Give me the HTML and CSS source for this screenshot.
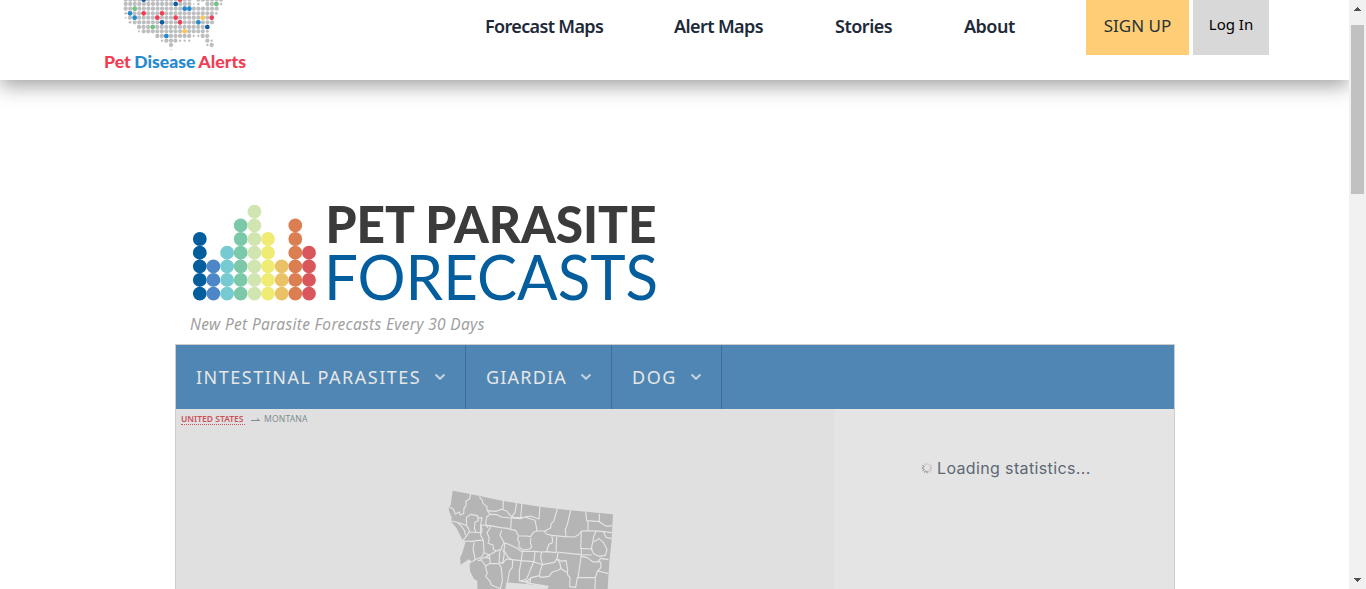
FILE: index.html
```html
<!DOCTYPE html>
<html lang="en">
<head>
<meta charset="utf-8">
<title>Pet Disease Alerts</title>
<link rel="stylesheet" href="styles.css">
</head>
<body>
<div class="window">
<div class="page">
<header class="header">
  <a class="brand">
    <svg width="160" height="80" viewBox="0 0 480 240">
      <g class="dots" fill="none" stroke="#bcbec0" stroke-linecap="round" stroke-width="12.8" stroke-dasharray="0 13.65">
        <path d="M92-1H285M310-1H384"/>
        <path d="M92 12H285M337 12H366"/>
        <path d="M92 26H366"/>
        <path d="M105 40H352"/>
        <path d="M105 53H352"/>
        <path d="M119 67H352"/>
        <path d="M132 81H339"/>
        <path d="M146 94H325"/>
        <path d="M187 108H285M323 108H339"/>
        <path d="M214 122H244M337 122H339"/>
        <path d="M228 135H230M350 135H352"/>
      </g>
      <g fill="#bcbec0">
        <circle cx="378" cy="12" r="4"/><circle cx="310" cy="12" r="4"/><circle cx="296" cy="12" r="2.5"/><circle cx="364" cy="40" r="4"/><circle cx="92" cy="40" r="4"/><circle cx="92" cy="53" r="2.5"/><circle cx="105" cy="67" r="4"/><circle cx="132" cy="94" r="3"/><circle cx="337" cy="94" r="4.5"/><circle cx="296" cy="108" r="3.5"/><circle cx="310" cy="108" r="3.5"/><circle cx="201" cy="122" r="3.5"/><circle cx="255" cy="122" r="3.5"/><circle cx="269" cy="122" r="3.5"/><circle cx="283" cy="122" r="3.5"/><circle cx="350" cy="122" r="3.5"/><circle cx="337" cy="135" r="3.5"/><circle cx="228" cy="149" r="2"/>
      </g>
      <g fill="#ef3e55"><circle cx="255" cy="-1" r="7"/><circle cx="146" cy="40" r="7"/><circle cx="201" cy="40" r="7"/><circle cx="187" cy="53" r="7"/><circle cx="242" cy="53" r="7"/><circle cx="350" cy="53" r="7"/><circle cx="255" cy="67" r="7"/></g>
      <g fill="#2489ce"><circle cx="269" cy="26" r="7"/><circle cx="283" cy="26" r="7"/><circle cx="105" cy="40" r="7"/><circle cx="119" cy="53" r="7"/><circle cx="310" cy="67" r="7"/><circle cx="214" cy="108" r="7"/></g>
      <g fill="#0d5ca3"><circle cx="146" cy="-1" r="7"/><circle cx="242" cy="12" r="7"/><circle cx="201" cy="67" r="7"/><circle cx="337" cy="81" r="7"/></g>
      <g fill="#6fc482"><circle cx="364" cy="12" r="7"/><circle cx="119" cy="26" r="7"/><circle cx="173" cy="81" r="7"/></g>
      <g fill="#fdc658"><circle cx="323" cy="53" r="7"/><circle cx="269" cy="94" r="7"/></g>
      <g class="brand-name">
        <text x="27" y="203" textLength="80" lengthAdjust="spacingAndGlyphs" fill="#ef3e55">Pet</text>
        <text x="118" y="203" textLength="183" lengthAdjust="spacingAndGlyphs" fill="#2489ce">Disease</text>
        <text x="310" y="203" textLength="143" lengthAdjust="spacingAndGlyphs" fill="#ef3e55">Alerts</text>
      </g>
    </svg>
  </a>
  <nav class="nav">
    <a class="nav-maps">Forecast Maps</a>
    <a class="nav-alerts">Alert Maps</a>
    <a class="nav-stories">Stories</a>
    <a class="nav-about">About</a>
  </nav>
  <div class="actions">
    <a class="signup">SIGN UP</a>
    <a class="login">Log In</a>
  </div>
</header>
<main class="main">
  <svg class="title" width="480" height="110" viewBox="0 0 480 110">
    <g fill="none" stroke-width="13.8" stroke-linecap="round" stroke-dasharray="0 13.65">
      <path stroke="#045d9d" d="M9.8 98.6V43.9"/>
      <path stroke="#4d87c8" d="M23.4 98.6V71"/>
      <path stroke="#76cad1" d="M37.1 98.6V57.5"/>
      <path stroke="#7bc9a9" d="M50.7 98.6V30.2"/>
      <path stroke="#d1e5b0" d="M64.4 98.6V16.6"/>
      <path stroke="#f0eb72" d="M78 98.6V43.9"/>
      <path stroke="#eac166" d="M91.7 98.6V71"/>
      <path stroke="#db7e52" d="M105.3 98.6V30.2"/>
      <path stroke="#d9565c" d="M119 98.6V57.5"/>
    </g>
    <text class="title-top" x="135.5" y="47.5" textLength="331" lengthAdjust="spacingAndGlyphs">PET PARASITE</text>
    <text class="title-bottom" x="134" y="105" textLength="334" lengthAdjust="spacingAndGlyphs">FORECASTS</text>
  </svg>
  <p class="tagline">New Pet Parasite Forecasts Every 30 Days</p>
  <section class="widget">
    <div class="menu">
      <div class="menu-item parasites"><span>INTESTINAL PARASITES</span><svg width="12" height="8" viewBox="0 0 12 8"><path d="M1.5 1.5 6 5.8 10.5 1.5"/></svg></div>
      <div class="menu-item giardia"><span>GIARDIA</span><svg width="12" height="8" viewBox="0 0 12 8"><path d="M1.5 1.5 6 5.8 10.5 1.5"/></svg></div>
      <div class="menu-item dog"><span>DOG</span><svg width="12" height="8" viewBox="0 0 12 8"><path d="M1.5 1.5 6 5.8 10.5 1.5"/></svg></div>
    </div>
    <div class="content">
      <div class="map">
        <div class="crumbs"><a class="country">UNITED STATES</a><svg width="10" height="5" viewBox="0 0 10 5"><path d="M0 3.5H8.5L6 1.5" fill="none" stroke="#7f8c8d"/></svg><span class="region">MONTANA</span></div>
        <svg class="state" width="200" height="109" viewBox="0 0 600 327">
          <path fill="#b5b5b5" d="M68 32 120 42 220 63 330 80 420 91 549 103 544 190 538 245 533 327H352L356 319 290 312 229 307 226 327H142V302L132 297 120 274 119 251 127 245 116 238 92 254 90 234 96 221 107 185 98 181 90 165 79 143 64 126 65 112 57 93 56 83 62 76Z"/>
          <g fill="none" stroke="#e5e5e5" stroke-width="3.4" stroke-linejoin="round">
            <path d="M58 82 70 87 76 102 88 96 90 105 101 101 102 84 108 78 108 63 118 58 122 42M148 50 157 61 159 70 171 80 171 90 180 103 170 111 167 129 173 143"/>
            <path d="M64 123 90 129 110 137 109 113 122 103 142 107 144 114 156 113 152 135 156 150 154 158 118 156 106 173 98 181M110 137 115 145 119 156M142 107 145 122 135 126 133 145 138 157M82 128 95 139 104 153 106 165"/>
            <path d="M171 92 199 94 214 88 230 93 241 107 252 112M220 63 219 90M180 103 201 104 214 111 241 114M260 68 255 97 244 113 242 148M276 70 272 114M250 113 276 113 302 108 327 117 330 80M242 114 272 116 284 111 315 121 319 140 321 154M180 137 212 143 234 145 242 149 257 151 265 167"/>
            <path d="M153 135 180 137 180 144 171 158 178 175 174 190 189 195 190 208 199 213M152 135V166L160 181 162 218 156 230 134 240 127 245M98 183 126 184 146 181 160 181M133 187 129 207 134 229 135 241M215 151 210 166 218 180 222 188 216 199 214 207 199 213 178 225 163 218"/>
            <path d="M382 87 371 124 363 132 362 143 344 154 349 162 365 166 404 170 432 171 445 165 456 152M422 91 412 133 406 149 408 169M321 153 310 157 302 170 288 168 265 168 263 180 268 187 266 201 280 210 299 207 305 201 301 189 303 174M321 153 344 153M365 168 368 178 366 190 357 192 350 213"/>
            <path d="M467 96 470 122 508 125 508 101M508 125 521 134 530 139 546 137M474 124 474 152 515 154 545 158M456 153 474 152M380 171 378 216 454 224 485 225M454 155 452 205 488 207M498 154 491 170 484 207 491 221 506 229 526 226 531 208 520 187 507 176 491 185M520 155 528 172 544 176"/>
            <path d="M222 188 236 193 260 204 274 214 315 214 335 216 352 215 378 218M225 189 222 210 233 230 245 239 274 242 310 245 337 254 373 247 381 236 384 218M277 214 274 242 268 272 268 303 288 299 296 283 303 265 312 244 315 214M335 216 332 232 337 254 331 272 328 288 332 292 357 289 366 277 386 270 393 265"/>
            <path d="M210 209 207 247 218 250 229 237 248 239 247 262 238 274 233 306M178 225 181 250 166 258 172 281 166 288 180 304 184 315 211 326 217 302 214 263 207 251 181 251M151 238 166 232 181 235M218 209 223 220 218 250M166 232 178 224M143 242 154 240 166 256M287 306 304 293 329 287M272 304 301 306 302 293"/>
            <path d="M381 236 394 244 408 241 413 268 412 283 420 293 419 320 437 322 442 293 496 293M512 246 504 245M454 224 444 293M454 208 454 229 472 233 489 246 504 245 512 235 535 239M393 265 389 247 382 240M393 266 410 277M512 246 513 263 503 273 535 280M503 273 496 293 495 327M287 308 356 320"/>
          </g>
        </svg>
      </div>
      <div class="stats">
        <svg width="12" height="12" viewBox="0 0 12 12" fill="none" stroke="#777" stroke-width="1">
          <path opacity=".3" d="M6 .8V3M8.6 1.5 7.5 3.4"/><path opacity=".5" d="M10.5 3.4 8.6 4.5M11.2 6H9M10.5 8.6 8.6 7.5M8.6 10.5 7.5 8.6"/><path d="M6 11.2V9M3.4 10.5 4.5 8.6M1.5 8.6 3.4 7.5M.8 6H3M1.5 3.4 3.4 4.5"/><path opacity=".3" d="M3.4 1.5 4.5 3.4"/>
        </svg>
        <span>Loading statistics...</span>
      </div>
    </div>
  </section>
</main>
</div>
<div class="scrollbar">
  <svg width="17" height="25" viewBox="0 0 17 25" shape-rendering="crispEdges"><path fill="#505050" d="M8 7H9V8H10V9H11V10H12V11H5V10H6V9H7V8H8Z"/></svg>
  <div class="thumb"></div>
  <svg class="down" width="17" height="17" viewBox="0 0 17 17" shape-rendering="crispEdges"><path fill="#505050" d="M5 6H12V7H11V8H10V9H9V10H8V9H7V8H6V7H5Z"/></svg>
</div>
</div>
</body>
</html>
```
FILE: styles.css
```css
* { box-sizing: border-box; }
body { margin: 0; overflow: hidden; background: #fff; font-family: "Noto Sans", "Open Sans", sans-serif; }
.window { display: flex; height: 589px; overflow: hidden; }
.page { width: 1349px; height: 589px; overflow: hidden; }
.header { display: flex; height: 80px; padding-left: 95px; background: #fff; box-shadow: 0 5px 20px rgba(0, 0, 0, .4); }
.brand, .brand svg { display: block; width: 160px; height: 80px; }
.brand-name { font: 900 53px Lato, sans-serif; }
.nav { display: flex; width: 831px; padding-left: 230px; white-space: nowrap; color: #1d2939; font-size: 18px; font-weight: 600; letter-spacing: -.5px; line-height: 53px; }
.nav-maps { width: 189px; letter-spacing: -.65px; }
.nav-alerts { width: 161px; letter-spacing: -.6px; }
.nav-stories { width: 129px; }
.actions { display: flex; gap: 4px; height: 55px; white-space: nowrap; text-align: center; }
.signup { width: 103px; background: #ffcd75; color: #263238; font-size: 17px; line-height: 52px; }
.login { width: 76px; background: #d8d8d8; color: #000; font-size: 15px; line-height: 49px; }
.main { padding: 115px 0 0 175px; }
.title { display: block; margin-left: 15px; overflow: visible; }
.title-top { font: 900 51px Lato, sans-serif; fill: #3b3b3b; }
.title-bottom { font: 400 62px Lato, sans-serif; fill: #045d9d; }
.tagline { height: 39px; margin: 0; padding-left: 15px; color: #a0a0a0; font-size: 15.5px; font-style: italic; letter-spacing: .32px; line-height: 39px; white-space: nowrap; }
.widget { width: 1000px; height: 261px; border: solid #ccc; border-width: 1px 1px 0; background: #e2e2e2; }
.menu { display: flex; height: 64px; background: #4f86b3; }
.menu-item { display: flex; align-items: center; justify-content: space-between; padding: 0 19px 0 20px; border-right: 1px solid #3f6f99; color: #e6e6e6; font-size: 18px; letter-spacing: 1.2px; white-space: nowrap; }
.menu-item svg { fill: none; stroke: #c3d1df; stroke-width: 2; }
.parasites { width: 290px; letter-spacing: 1.5px; }
.giardia { width: 146px; }
.dog { width: 110px; letter-spacing: 1.5px; }
.content { display: flex; height: 196px; }
.map { width: 658px; background: #e0e0e0; }
.crumbs { display: flex; align-items: center; height: 20px; padding-left: 5px; font-size: 8.5px; white-space: nowrap; }
.country { width: 64px; height: 12px; border-bottom: 1px dotted #c9505c; color: #c9505c; font-weight: 600; line-height: 12px; }
.crumbs svg { margin: 0 3px 0 6px; }
.region { color: #7f8c8d; letter-spacing: .2px; line-height: 12px; }
.state { display: block; margin: 51px 0 0 254px; }
.stats { display: flex; gap: 4px; flex: 1; padding: 49px 0 0 87px; background: #e4e4e4; color: #5d6874; font: 400 16px/20px Inter, sans-serif; letter-spacing: .36px; white-space: nowrap; }
.stats svg { margin-top: 4px; }
.scrollbar { display: flex; flex-direction: column; width: 17px; height: 589px; background: #f1f1f1; }
.thumb { width: 13px; height: 169px; margin-left: 2px; background: #c1c1c1; }
.down { margin-top: auto; }
```
